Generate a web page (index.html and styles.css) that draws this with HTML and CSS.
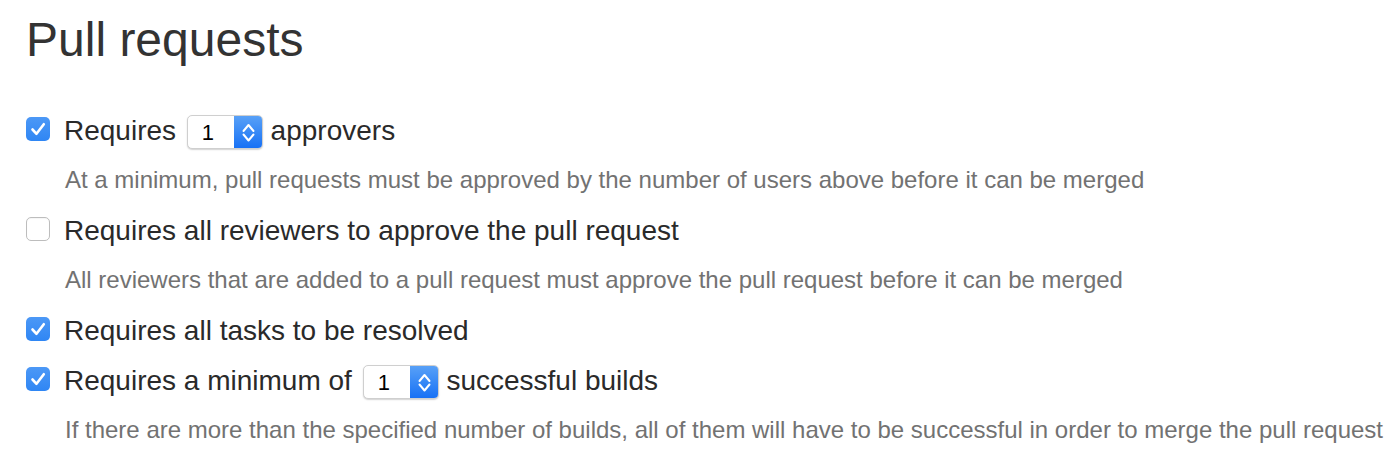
FILE: index.html
```html
<!DOCTYPE html>
<html>
<head>
<meta charset="utf-8">
<link rel="stylesheet" href="styles.css">
</head>
<body>
<div class="page">
  <h1 class="title">Pull requests</h1>
  <div class="options">
    <div class="item">
      <div class="row">
        <span class="check on"><svg viewBox="0 0 24 24" width="24" height="24"><path d="M6.5 12.5 L10.5 16.8 L17.8 7.2" fill="none" stroke="#fff" stroke-width="2.6" stroke-linecap="round" stroke-linejoin="round"/></svg></span>
        <span class="label">Requires <span class="select"><span class="val">1</span><span class="arrows"><svg viewBox="0 0 29 34" width="29" height="34"><path d="M9.5 16 L14.5 10 L19.5 16 M9.5 19.5 L14.5 25.5 L19.5 19.5" fill="none" stroke="#fff" stroke-width="2" stroke-linecap="round" stroke-linejoin="round"/></svg></span></span> approvers</span>
      </div>
      <div class="desc">At a minimum, pull requests must be approved by the number of users above before it can be merged</div>
    </div>
    <div class="item">
      <div class="row">
        <span class="check off"></span>
        <span class="label">Requires all reviewers to approve the pull request</span>
      </div>
      <div class="desc">All reviewers that are added to a pull request must approve the pull request before it can be merged</div>
    </div>
    <div class="item">
      <div class="row">
        <span class="check on"><svg viewBox="0 0 24 24" width="24" height="24"><path d="M6.5 12.5 L10.5 16.8 L17.8 7.2" fill="none" stroke="#fff" stroke-width="2.6" stroke-linecap="round" stroke-linejoin="round"/></svg></span>
        <span class="label">Requires all tasks to be resolved</span>
      </div>
    </div>
    <div class="item">
      <div class="row">
        <span class="check on"><svg viewBox="0 0 24 24" width="24" height="24"><path d="M6.5 12.5 L10.5 16.8 L17.8 7.2" fill="none" stroke="#fff" stroke-width="2.6" stroke-linecap="round" stroke-linejoin="round"/></svg></span>
        <span class="label">Requires a minimum of <span class="select"><span class="val">1</span><span class="arrows"><svg viewBox="0 0 29 34" width="29" height="34"><path d="M9.5 16 L14.5 10 L19.5 16 M9.5 19.5 L14.5 25.5 L19.5 19.5" fill="none" stroke="#fff" stroke-width="2" stroke-linecap="round" stroke-linejoin="round"/></svg></span></span> successful builds</span>
      </div>
      <div class="desc">If there are more than the specified number of builds, all of them will have to be successful in order to merge the pull request</div>
    </div>
  </div>
</div>
</body>
</html>
```

FILE: styles.css
```css
html, body {
  margin: 0;
  padding: 0;
  background: #fff;
}
body {
  font-family: "Liberation Sans", Arial, Helvetica, sans-serif;
  color: #333;
}
.page {
  padding: 14px 0 0 26px;
}
.title {
  margin: 0;
  font-size: 48px;
  font-weight: normal;
  line-height: 52.8px;
  color: #333;
}
.options {
  margin-top: 39.5px;
}
.row {
  display: flex;
  align-items: flex-start;
  height: 50px;
}
.check {
  box-sizing: border-box;
  width: 24px;
  height: 24px;
  margin: 11px 0 0 0;
  border-radius: 5px;
  flex: none;
}
.check svg {
  display: block;
}
.check.on {
  background: #3b8ef5;
  background: linear-gradient(#4c98f6, #2f86f4);
}
.check.off {
  background: #fff;
  border: 1px solid #bdbdbd;
  box-shadow: inset 0 1px 1px rgba(0,0,0,0.04);
}
.label {
  margin-left: 14px;
  font-size: 28px;
  line-height: 50px;
  color: #2a2a2a;
  white-space: nowrap;
}
.select {
  display: inline-flex;
  box-sizing: border-box;
  width: 76px;
  height: 34px;
  margin-left: 3px;
  vertical-align: middle;
  border: 1px solid #cfcfcf;
  border-radius: 5px;
  background: #fff;
  box-shadow: 0 1px 1.5px rgba(0,0,0,0.18);
  overflow: hidden;
  position: relative;
  top: -1px;
}
.val {
  flex: 1;
  padding-left: 14px;
  font-size: 22px;
  line-height: 33px;
  color: #000;
}
.arrows {
  width: 29px;
  height: 34px;
  margin: -1px -1px -1px 0;
  background: linear-gradient(#5aa2f7, #1670f5);
}
.arrows svg {
  display: block;
}
.desc {
  margin: 9px 0 11px 39px;
  font-size: 24px;
  line-height: 30px;
  color: #727272;
  white-space: nowrap;
}
```
